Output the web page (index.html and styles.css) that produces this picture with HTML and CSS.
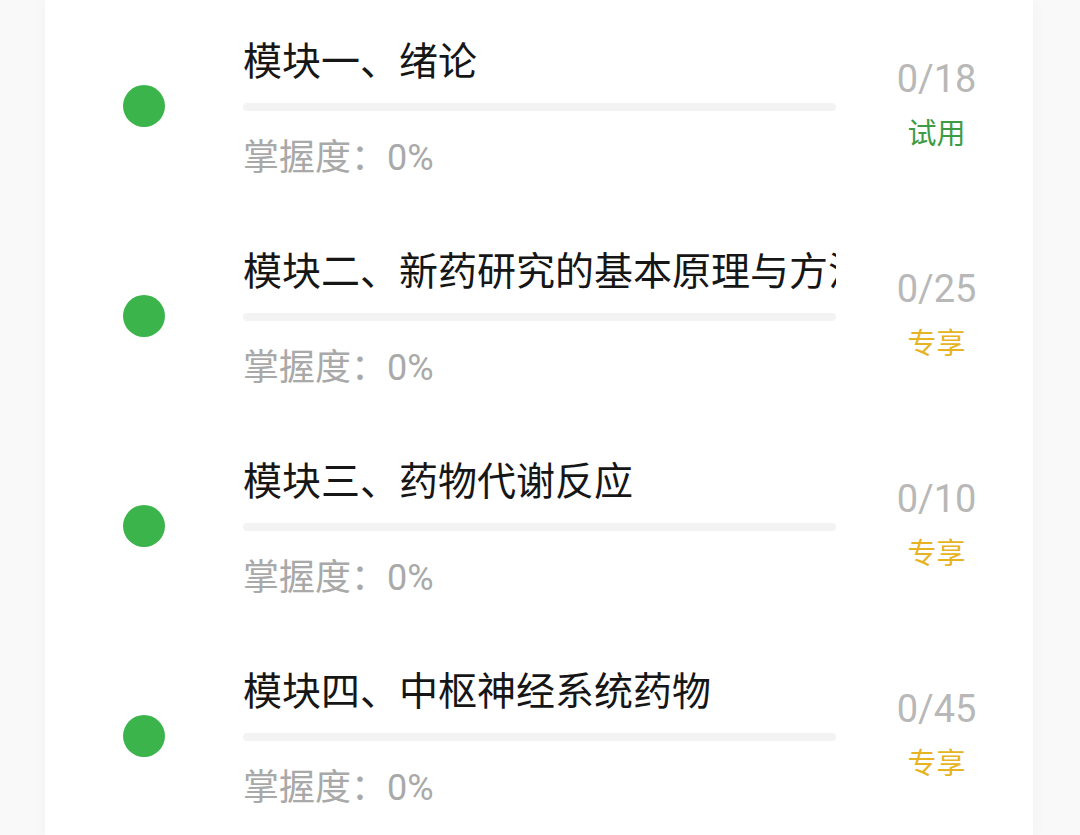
FILE: index.html
```html
<!DOCTYPE html>
<html lang="zh-CN">
<head>
<meta charset="utf-8">
<link rel="stylesheet" href="styles.css">
</head>
<body>
<div class="card">
  <div class="row">
    <div class="dot"></div>
    <div class="content">
      <div class="title">模块一、绪论</div>
      <div class="bar"></div>
      <div class="mastery">掌握度：0%</div>
    </div>
    <div class="side">
      <div class="count">0/18</div>
      <div class="tag trial">试用</div>
    </div>
  </div>
  <div class="row">
    <div class="dot"></div>
    <div class="content">
      <div class="title">模块二、新药研究的基本原理与方法</div>
      <div class="bar"></div>
      <div class="mastery">掌握度：0%</div>
    </div>
    <div class="side">
      <div class="count">0/25</div>
      <div class="tag vip">专享</div>
    </div>
  </div>
  <div class="row">
    <div class="dot"></div>
    <div class="content">
      <div class="title">模块三、药物代谢反应</div>
      <div class="bar"></div>
      <div class="mastery">掌握度：0%</div>
    </div>
    <div class="side">
      <div class="count">0/10</div>
      <div class="tag vip">专享</div>
    </div>
  </div>
  <div class="row">
    <div class="dot"></div>
    <div class="content">
      <div class="title">模块四、中枢神经系统药物</div>
      <div class="bar"></div>
      <div class="mastery">掌握度：0%</div>
    </div>
    <div class="side">
      <div class="count">0/45</div>
      <div class="tag vip">专享</div>
    </div>
  </div>
</div>
</body>
</html>
```

FILE: styles.css
```css
html, body {
  margin: 0;
  padding: 0;
  background: #f9f9f9;
  height: 835px;
  overflow: hidden;
}
body {
  font-family: Roboto, "Noto Sans CJK SC", sans-serif;
}
.card {
  margin-left: 45px;
  width: 988px;
  background: #ffffff;
  box-shadow: 0 0 14px rgba(0, 0, 0, 0.035);
  min-height: 835px;
}
.row {
  height: 210px;
  display: grid;
  grid-template-columns: 198px 593px 1fr;
  align-items: start;
}
.dot {
  width: 42px;
  height: 42px;
  border-radius: 50%;
  background: #3bb44b;
  margin-left: 78px;
  margin-top: 85px;
}
.content {
  margin-top: 38px;
  min-width: 0;
}
.title {
  font-size: 39px;
  line-height: 48px;
  color: #161616;
  white-space: nowrap;
  overflow: hidden;
}
.bar {
  height: 8px;
  border-radius: 4px;
  background: #f3f3f3;
  margin-top: 17px;
}
.mastery {
  font-size: 36px;
  line-height: 44px;
  color: #a9a9a9;
  margin-top: 25px;
}
.side {
  display: flex;
  flex-direction: column;
  align-items: center;
  padding-left: 4px;
  margin-top: 56px;
}
.count {
  font-size: 38px;
  line-height: 46px;
  color: #b8b8b8;
}
.tag {
  font-size: 29px;
  line-height: 36px;
  margin-top: 14px;
}
.trial {
  color: #3d9b45;
}
.vip {
  color: #e6b422;
}
```
